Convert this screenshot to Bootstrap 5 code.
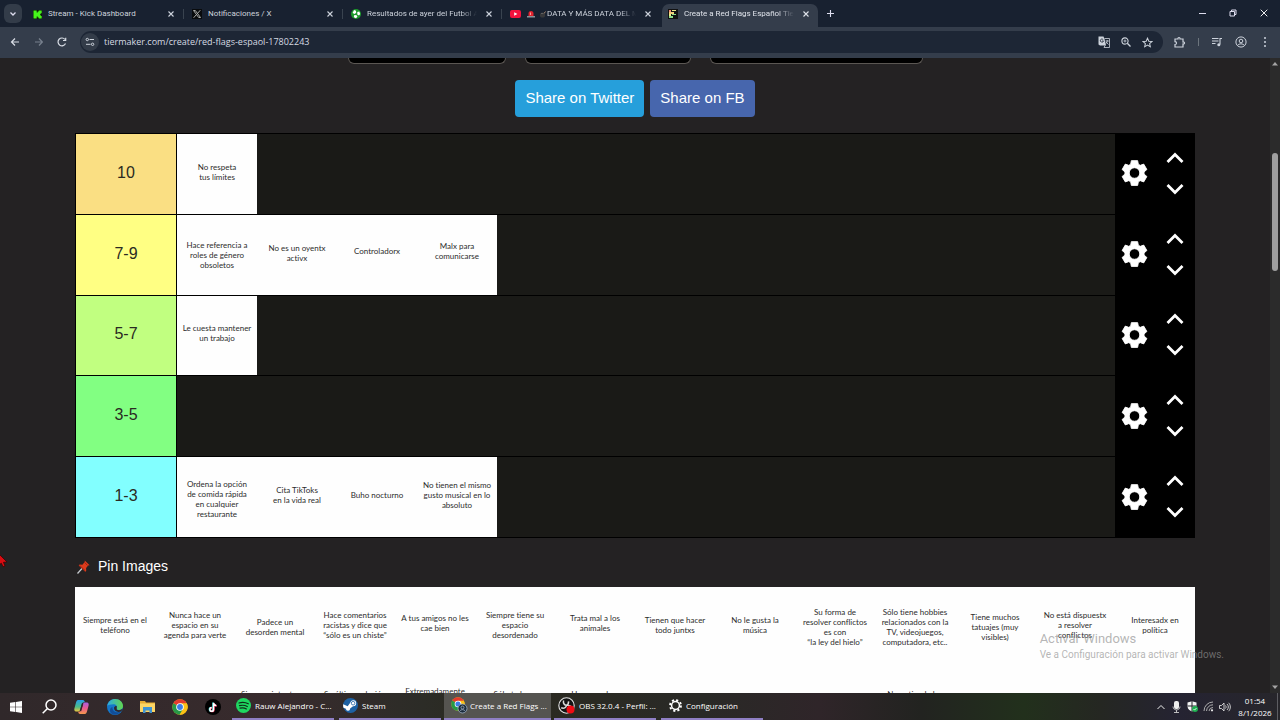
<!DOCTYPE html>
<html lang="es">
<head>
<meta charset="utf-8">
<meta name="viewport" content="width=device-width, initial-scale=1">
<title>Create a Red Flags Español Tier List</title>
<link href="https://cdn.jsdelivr.net/npm/bootstrap@5.3.0/dist/css/bootstrap.min.css" rel="stylesheet">
<style>
  :root { --strip:#182130; --tool:#343d4b; --omni:#1d2635; --page:#242223; --drop:#1a1a17; --ico:#cdd3dc; }
  body { font-family:"Liberation Sans",Arial,sans-serif; background:var(--page); color:#fff; }
  button { background:none; border:0; padding:0; color:inherit; }
  svg { display:block; flex:none; }
  .ui-font { font-family:"Open Sans","Noto Sans",sans-serif; }

  /* browser window */
  .tab-strip { height:27px; background:var(--strip); font-family:Roboto,"Open Sans",sans-serif; font-size:8px; color:var(--ico); }
  .tab-list-btn { width:18px; height:19px; border-radius:6px; background:#333c49; margin:0 4px; }
  .tab-item { flex:0 1 159px; min-width:0; height:23px; padding:0 10px 3px 7px; position:relative; }
  .tab-item:not(.is-active):not(.no-line)::after { content:""; position:absolute; right:1px; top:5px; width:1px; height:10px; background:#39434f; }
  .tab-item.is-active { background:var(--tool); border-radius:7px 7px 0 0; flex-basis:156px; padding-left:6px; padding-right:8px; color:#dfe3ea; }
  .tab-name { flex:1; min-width:0; overflow:hidden; white-space:nowrap; margin:0 8px 0 6px; }
  .tab-name.fades { -webkit-mask-image:linear-gradient(90deg,#000 85%,transparent); mask-image:linear-gradient(90deg,#000 85%,transparent); }
  .window-btns { gap:23px; padding:0 12px 1px 0; }
  .tool-row { height:31px; padding:0 9px 1px 9px; background:var(--tool); color:var(--ico); }
  .nav-btns { gap:14px; margin-right:13px; }
  .end-btns { gap:12px; margin-left:11px; }
  .omnibox { height:22px; border-radius:11px; background:var(--omni); padding:0 10px 0 1px; gap:11px; }
  .omnibox input { background:none; border:0; outline:0; color:#d5dae2; font-size:9px; padding:0; min-width:0; margin-left:-6px; }
  .site-chip { width:18px; height:18px; border-radius:50%; background:#333c49; }

  /* tier list page */
  .page-body { max-width:1120px; }
  .field-row { gap:19px; }
  .field-end { height:6px; background:#000; border:1px solid #5b5753; border-top:0; border-radius:0 0 6px 6px; }
  .share-row { gap:6px; }
  .share-btn { font-size:15px; line-height:23px; padding:6px 10px 8px; border-radius:4px; color:#fff; border:0; }
  .share-tw { background:#269fdb; }
  .share-fb { background:#4766ad; }
  .tier-board { min-height:405px; grid-template-rows:repeat(5,1fr); background:#000; padding:1px 0 0 1px; }
  .tier-line { background:var(--drop); border-bottom:1px solid #000; }
  .tier-name { width:101px; border-right:1px solid #000; color:#2a2a22; font-size:16px; padding-bottom:2px; }
  .tier-tools { width:80px; background:#000; padding:0 11px 1px 6px; }
  .move-btns { gap:19px; }
  .tile { width:80px; background:#fefefe; color:#2c2c2c; font:8px/10px Lato,"Open Sans",sans-serif; font-variant-ligatures:none; white-space:nowrap; text-align:center; display:flex; align-items:center; justify-content:center; }
  .pin-title { font-size:14px; line-height:21px; padding:18px 0 10px 2px; }
  .pin-board { display:grid; grid-template-columns:repeat(auto-fill,80px); grid-auto-rows:80px; background:#fefefe; }
  .tile-low { align-items:flex-start; padding-top:22px; }
  .tile-tall { align-items:flex-start; padding-top:19px; }
  .scroll-track { width:10px; background:#2b2b2b; padding:3px 2px; }
  .scroll-thumb { height:118px; border-radius:3px; background:#9f9f9f; margin-top:87px; }
  .watermark { right:56px; bottom:32px; font-family:Roboto,"Open Sans",sans-serif; color:rgba(145,145,145,.68); white-space:nowrap; z-index:3; pointer-events:none; }
  .watermark div { font-size:13px; line-height:18px; }
  .watermark p { font-size:10px; line-height:13px; }
  .pointer { left:-3px; top:495px; }

  /* taskbar */
  .task-bar { height:27px; font-size:8px; background:linear-gradient(90deg,#30282a 0,#382b2d 22%,#2c2c27 33%,#2b2a20 38%,#292926 55%,#2f2529 64%,#222320 72%,#22301c 80%,#252722 86%,#252332 92%,#27262b 100%); }
  .task-icons { flex:0 0 232px; padding-right:3px; }
  .task-icon { flex:1; height:27px; }
  .task-apps { gap:5px; }
  .task-app { flex:0 1 102px; min-width:0; height:27px; border-bottom:2px solid #8f7fc4; padding-left:4px; gap:4px; white-space:nowrap; overflow:hidden; }
  .task-app.is-open { flex-basis:107px; margin:0 -2px; background:#555450; padding-left:7px; gap:2px; }
  .tray-icons { gap:5px; }
  .task-clock { width:48px; line-height:12px; padding-top:2px; }
  .desk-edge { width:3px; border-left:1px solid #5d5d62; margin-left:-2px; }
</style>
</head>
<body class="vh-100 d-flex flex-column overflow-hidden">

<svg width="0" height="0" class="position-absolute" aria-hidden="true">
  <symbol id="x" viewBox="0 0 8 8"><path d="M1.500 1.500l5 5m0-5l-5 5" stroke="currentColor" stroke-width="1.100"/></symbol>
  <symbol id="gear" viewBox="0 0 24 24"><path fill="currentColor" stroke="currentColor" stroke-width=".8" stroke-linejoin="round" fill-rule="evenodd" d="M9.200 1h5.600l.6 3.200 1.700 1 3.100-1.100 2.800 4.800-2.500 2.100v2l2.500 2.100-2.800 4.800-3.100-1.100-1.700 1-.6 3.200H9.200l-.6-3.200-1.700-1-3.100 1.100L1 15.100 3.500 13v-2L1 8.900l2.800-4.800 3.100 1.100 1.700-1zM12 7.300a4.700 4.700 0 1 0 0 9.400 4.700 4.700 0 0 0 0-9.400z"/></symbol>
  <symbol id="up" viewBox="0 0 18 12"><path d="M1.500 10L9 2.500 16.500 10" fill="none" stroke="currentColor" stroke-width="2.800"/></symbol>
  <symbol id="down" viewBox="0 0 18 12"><path d="M1.500 2L9 9.500 16.500 2" fill="none" stroke="currentColor" stroke-width="2.800"/></symbol>
  <symbol id="chrome" viewBox="0 0 24 24"><circle cx="12" cy="12" r="11.500" fill="#fbc116"/><path d="M12 12L2 6.200A11.500 11.500 0 0 1 22 6.200z" fill="#e33b2e"/><path d="M2 6.200a11.500 11.500 0 0 0 9.500 17.300L17 15l-5-3z" fill="#279847"/><path d="M12 6.500h10.100a11.500 11.500 0 0 1-10.600 17l5.300-9z" fill="#fbc116"/><circle cx="12" cy="12" r="5.700" fill="#fff"/><circle cx="12" cy="12" r="4.400" fill="#3c7de6"/></symbol>
</svg>

<header class="ui-font flex-shrink-0">
  <nav class="tab-strip d-flex align-items-end" aria-label="Pestañas">
    <button class="tab-list-btn d-flex align-items-center justify-content-center align-self-center" aria-label="Buscar pestañas"><svg width="8" height="8" viewBox="0 0 8 8"><path d="M1.500 2.500L4 5l2.500-2.500" fill="none" stroke="#dde" stroke-width="1.300"/></svg></button>
    <div class="tab-item d-flex align-items-center">
      <svg width="9" height="9" viewBox="0 0 9 9"><path fill="#0c1a0a" d="M0 0h9v9H0z"/><path fill="#46f51b" d="M.5.500h3.200v2h1v-1h1v-1h3v2.700h-1v1h-.7v.8h.7v1h1v2.500h-3v-1h-1v-1h-1v2H.5z"/></svg>
      <span class="tab-name">Stream - Kick Dashboard</span><button aria-label="Cerrar"><svg width="8" height="8"><use href="#x"/></svg></button>
    </div>
    <div class="tab-item d-flex align-items-center">
      <svg width="10" height="10" viewBox="0 0 10 10"><path fill="#090b0d" d="M0 0h10v10H0z"/><path d="M1.500 1.500h1.800l5.200 7H6.700zM8.300 1.200L5.600 4.300M4.400 5.600L1.600 8.800" fill="none" stroke="#b9bbb9" stroke-width=".9"/></svg>
      <span class="tab-name">Notificaciones / X</span><button aria-label="Cerrar"><svg width="8" height="8"><use href="#x"/></svg></button>
    </div>
    <div class="tab-item d-flex align-items-center">
      <svg width="10" height="10" viewBox="0 0 10 10"><circle cx="5" cy="5" r="5" fill="#1c9a2b"/><path fill="#fff" d="M3 1l2 .8.200 2L3.600 5 1.600 4zM6.300 3l2-.5L9.200 5 8 6.500 6.300 5.400zM3 6.300l2.300-.2 1.200 1.600-1.600 1.600-2-1z"/></svg>
      <span class="tab-name fades">Resultados de ayer del Futbol A</span><button aria-label="Cerrar"><svg width="8" height="8"><use href="#x"/></svg></button>
    </div>
    <div class="tab-item no-line d-flex align-items-center">
      <svg width="11" height="8" viewBox="0 0 11 8"><rect width="11" height="8" rx="2" fill="#f3123d"/><path d="M4.200 2.200v3.600L7.400 4z" fill="#fff"/></svg>
      <span class="tab-name fades d-flex align-items-center"><svg width="8" height="8" viewBox="0 0 8 8"><path d="M1.500 6V3.600a2.500 2.500 0 0 1 5 0V6z" fill="#e2232e"/><path d="M0 6h8v1.500H0z" fill="#8c9299"/><path d="M3 2.500h1V5H3z" fill="#ff9d9a"/></svg><svg class="ms-1" width="8" height="8" viewBox="0 0 7 8"><circle cx="3" cy="5" r="2.600" fill="#37383a"/><path d="M4.500 3.500L6 1.500" stroke="#a88a70"/><path d="M2 4l1-1" stroke="#888"/></svg>DATA Y MÁS DATA DEL M</span><button aria-label="Cerrar"><svg width="8" height="8"><use href="#x"/></svg></button>
    </div>
    <div class="tab-item is-active d-flex align-items-center">
      <svg width="10" height="10" viewBox="0 0 10 10"><path fill="#111" d="M0 0h10v10H0z"/><path fill="#f08a76" d="M1 1h2v2H1z"/><path fill="#f1cf7a" d="M1 3h5v2H1z"/><path fill="#e9e98b" d="M4 1h4v1H4zM1 5h2v2H1z"/><path fill="#8fdd8b" d="M1 7h4v2H1zM4 5h4v1H4z"/></svg>
      <span class="tab-name fades">Create a Red Flags Español Tier</span><button aria-label="Cerrar"><svg width="8" height="8"><use href="#x"/></svg></button>
    </div>
    <button class="align-self-center ms-2" aria-label="Nueva pestaña"><svg width="9" height="9" viewBox="0 0 9 9"><path d="M4.500 1v7M1 4.500h7" stroke="#dde" stroke-width="1.100"/></svg></button>
    <div class="window-btns ms-auto d-flex align-items-center align-self-center">
      <button aria-label="Minimizar"><svg width="7" height="7" viewBox="0 0 7 7"><path d="M0 3.500h7" stroke="#dde"/></svg></button>
      <button aria-label="Restaurar"><svg width="8" height="8" viewBox="0 0 8 8"><path d="M1 2.500h4.500V7H1zM2.500 2.500V1H7v4.500H5.500" fill="none" stroke="#dde"/></svg></button>
      <button aria-label="Cerrar ventana"><svg width="8" height="8" viewBox="0 0 8 8"><path d="M.7.700l6.600 6.600m0-6.600L.7 7.300" stroke="#eee"/></svg></button>
    </div>
  </nav>

  <div class="tool-row d-flex align-items-center">
    <div class="nav-btns d-flex align-items-center">
      <button aria-label="Atrás"><svg width="12" height="10" viewBox="0 0 12 10"><path d="M10 5H2.500M6 1.500L2.500 5 6 8.500" fill="none" stroke="#d8dde5" stroke-width="1.200"/></svg></button>
      <button aria-label="Adelante"><svg width="8" height="10" viewBox="0 0 8 10"><path d="M0 5h7M4 1.500L7.300 5 4 8.500" fill="none" stroke="#77808d" stroke-width="1.200"/></svg></button>
      <button aria-label="Recargar"><svg width="10" height="10" viewBox="0 0 10 10"><path d="M8.500 6.500A3.900 3.900 0 1 1 8 2.500M8.700.8v2.700H6" fill="none" stroke="#d8dde5" stroke-width="1.200"/></svg></button>
    </div>
    <div class="omnibox d-flex align-items-center flex-fill">
      <button class="site-chip d-flex align-items-center justify-content-center" aria-label="Información del sitio"><svg width="10" height="10" viewBox="0 0 10 10"><g fill="none" stroke="currentColor"><path d="M4.500 2.500H9M1 7.300h4.500"/><circle cx="2.300" cy="2.500" r="1.200"/><circle cx="7.600" cy="7.300" r="1.200"/></g></svg></button>
      <input class="flex-fill" type="text" aria-label="Dirección" value="tiermaker.com/create/red-flags-espaol-17802243">
      <button aria-label="Traducir"><svg width="12" height="12" viewBox="0 0 12 12"><path d="M.5.500h5l1 2.500 1.500 6.500h-6l-1.500-1z" fill="#cdd3dc"/><path d="M5.200 3.600A1.600 1.600 0 1 0 5.500 5H4" fill="none" stroke="#1d2635" stroke-width=".8"/><path d="M6.500 2.500h5v9H6l1-2M7.500 5h3.400M9.200 4v1c0 1.500-1 2.500-1.600 3M8 6l2.500 2.500" fill="none" stroke="#cdd3dc" stroke-width=".8"/></svg></button>
      <button aria-label="Zoom"><svg width="10" height="10" viewBox="0 0 10 10"><g fill="none" stroke="currentColor"><circle cx="4" cy="4" r="3.100" stroke-width="1.100"/><path d="M6.300 6.300L9.500 9.500" stroke-width="1.300"/><path d="M4 2.500v3M2.500 4h3" stroke-width=".8"/></g></svg></button>
      <button aria-label="Favorito"><svg width="11" height="11" viewBox="0 0 24 24"><path d="M12 2.500l2.900 6.600 7 .6-5.300 4.700 1.600 7L12 17.600l-6.200 3.800 1.600-7L2.100 9.700l7-.6z" fill="none" stroke="currentColor" stroke-width="2.200"/></svg></button>
    </div>
    <div class="end-btns d-flex align-items-center">
      <button aria-label="Extensiones"><svg width="12" height="12" viewBox="0 0 12 12"><path d="M1 3h3c-.3-2 2.300-2 2 0h3v3c2-.3 2 2.300 0 2v3H1V8.500c2 0 2-2.800 0-2.800z" fill="none" stroke="currentColor" stroke-width="1.200"/></svg></button>
      <span class="border-start border-secondary py-1"></span>
      <button aria-label="Multimedia"><svg width="12" height="10" viewBox="0 0 12 10"><path d="M1 1.500h6.500M1 4h6.500M1 6.500h3.500M9 7.500v-6h2" fill="none" stroke="currentColor" stroke-width="1.100"/><circle cx="7.800" cy="7.700" r="1.500" fill="currentColor"/></svg></button>
      <button aria-label="Perfil"><svg width="12" height="12" viewBox="0 0 12 12"><g fill="none" stroke="currentColor"><circle cx="6" cy="6" r="5.100"/><circle cx="6" cy="5" r="1.800"/><path d="M2.500 9.500c1.600-2.200 5.400-2.200 7 0"/></g></svg></button>
      <button aria-label="Menú"><svg width="12" height="12" viewBox="0 0 12 12"><g fill="currentColor"><circle cx="6" cy="2" r="1"/><circle cx="6" cy="6" r="1"/><circle cx="6" cy="10" r="1"/></g></svg></button>
    </div>
  </div>
</header>

<div class="flex-fill d-flex overflow-hidden position-relative">
  <main class="flex-fill overflow-hidden">
    <div class="field-row row g-0 justify-content-center mb-3" aria-hidden="true">
      <div class="field-end" style="width:158px"></div>
      <div class="field-end" style="width:166px"></div>
      <div class="field-end" style="width:213px"></div>
    </div>
    <div class="share-row d-flex justify-content-center mb-3">
      <button class="share-btn share-tw">Share on Twitter</button>
      <button class="share-btn share-fb">Share on FB</button>
    </div>

    <div class="page-body mx-auto">
      <section class="tier-board d-grid">
        <div class="tier-line d-flex">
          <div class="tier-name d-flex align-items-center justify-content-center" style="background:#fadf83">10</div>
          <div class="tile pb-1">No respeta<br>tus límites</div>
          <div class="tier-tools d-flex align-items-center justify-content-between ms-auto"><button aria-label="Ajustes"><svg width="27" height="28"><use href="#gear"/></svg></button><div class="move-btns d-grid"><button aria-label="Subir"><svg width="18" height="12"><use href="#up"/></svg></button><button aria-label="Bajar"><svg width="18" height="12"><use href="#down"/></svg></button></div></div>
        </div>
        <div class="tier-line d-flex">
          <div class="tier-name d-flex align-items-center justify-content-center" style="background:#ffff83">7-9</div>
          <div class="tile">Hace referencia a<br>roles de género<br>obsoletos</div>
          <div class="tile pb-1">No es un oyentx<br>activx</div>
          <div class="tile pb-2">Controladorx</div>
          <div class="tile pb-2">Malx para<br>comunicarse</div>
          <div class="tier-tools d-flex align-items-center justify-content-between ms-auto"><button aria-label="Ajustes"><svg width="27" height="28"><use href="#gear"/></svg></button><div class="move-btns d-grid"><button aria-label="Subir"><svg width="18" height="12"><use href="#up"/></svg></button><button aria-label="Bajar"><svg width="18" height="12"><use href="#down"/></svg></button></div></div>
        </div>
        <div class="tier-line d-flex">
          <div class="tier-name d-flex align-items-center justify-content-center" style="background:#c1ff80">5-7</div>
          <div class="tile pb-1">Le cuesta mantener<br>un trabajo</div>
          <div class="tier-tools d-flex align-items-center justify-content-between ms-auto"><button aria-label="Ajustes"><svg width="27" height="28"><use href="#gear"/></svg></button><div class="move-btns d-grid"><button aria-label="Subir"><svg width="18" height="12"><use href="#up"/></svg></button><button aria-label="Bajar"><svg width="18" height="12"><use href="#down"/></svg></button></div></div>
        </div>
        <div class="tier-line d-flex">
          <div class="tier-name d-flex align-items-center justify-content-center" style="background:#82ff82">3-5</div>
          <div class="tier-tools d-flex align-items-center justify-content-between ms-auto"><button aria-label="Ajustes"><svg width="27" height="28"><use href="#gear"/></svg></button><div class="move-btns d-grid"><button aria-label="Subir"><svg width="18" height="12"><use href="#up"/></svg></button><button aria-label="Bajar"><svg width="18" height="12"><use href="#down"/></svg></button></div></div>
        </div>
        <div class="tier-line d-flex">
          <div class="tier-name d-flex align-items-center justify-content-center" style="background:#82ffff">1-3</div>
          <div class="tile pt-1">Ordena la opción<br>de comida rápida<br>en cualquier<br>restaurante</div>
          <div class="tile pb-1">Cita TikToks<br>en la vida real</div>
          <div class="tile pb-1">Buho nocturno</div>
          <div class="tile pb-1">No tienen el mismo<br>gusto musical en lo<br>absoluto</div>
          <div class="tier-tools d-flex align-items-center justify-content-between ms-auto"><button aria-label="Ajustes"><svg width="27" height="28"><use href="#gear"/></svg></button><div class="move-btns d-grid"><button aria-label="Subir"><svg width="18" height="12"><use href="#up"/></svg></button><button aria-label="Bajar"><svg width="18" height="12"><use href="#down"/></svg></button></div></div>
        </div>
      </section>

      <h2 class="pin-title d-flex align-items-center gap-2 m-0 fw-normal"><svg width="13" height="14" viewBox="0 0 13 14"><path d="M.5 13.500L5 8.500" stroke="#c7cbd0" stroke-width="1.200"/><path d="M7.800.5l4.800 4.700-1.500.4-2 2.400.1 2.900-1 .8L1.700 5.400l.9-.9 2.800.2L7.700 2z" fill="#dd3b1c"/><path d="M7.600 2.500l3 3M2.600 5.400L8 10.600" stroke="#8f1d10" stroke-width=".8"/></svg>Pin Images</h2>
      <section class="pin-board">
        <div class="tile pb-1">Siempre está en el<br>teléfono</div>
        <div class="tile pb-1">Nunca hace un<br>espacio en su<br>agenda para verte</div>
        <div class="tile">Padece un<br>desorden mental</div>
        <div class="tile pb-1">Hace comentarios<br>racistas y dice que<br>“sólo es un chiste”</div>
        <div class="tile pb-2">A tus amigos no les<br>cae bien</div>
        <div class="tile pb-1">Siempre tiene su<br>espacio<br>desordenado</div>
        <div class="tile pb-2">Trata mal a los<br>animales</div>
        <div class="tile pb-1">Tienen que hacer<br>todo juntxs</div>
        <div class="tile pb-1">No le gusta la<br>música</div>
        <div class="tile">Su forma de<br>resolver conflictos<br>es con<br>“la ley del hielo”</div>
        <div class="tile">Sólo tiene hobbies<br>relacionados con la<br>TV, videojuegos,<br>computadora, etc..</div>
        <div class="tile">Tiene muchos<br>tatuajes (muy<br>visibles)</div>
        <div class="tile pb-1">No está dispuestx<br>a resolver<br>conflictos</div>
        <div class="tile pb-1">Interesadx en<br>política</div>
        <div class="tile"></div>
        <div class="tile"></div>
        <div class="tile tile-low">Siempre intenta ser</div>
        <div class="tile tile-low">Su última relación</div>
        <div class="tile tile-tall">Extremadamente</div>
        <div class="tile tile-low">Sólo te hace</div>
        <div class="tile tile-low">Hace muchos</div>
        <div class="tile"></div>
        <div class="tile"></div>
        <div class="tile"></div>
        <div class="tile tile-low">No entiende los</div>
      </section>
    </div>
  </main>
  <div class="scroll-track d-flex flex-column align-items-stretch flex-shrink-0" aria-hidden="true">
    <svg width="6" height="5" viewBox="0 0 6 5"><path d="M0 4.500L3 1l3 3.500z" fill="#a5a5a5"/></svg>
    <div class="scroll-thumb flex-shrink-0"></div>
    <svg class="mt-auto" width="6" height="5" viewBox="0 0 6 5"><path d="M0 .5L3 4l3-3.500z" fill="#a5a5a5"/></svg>
  </div>
  <aside class="watermark position-absolute"><div>Activar Windows</div><p class="m-0">Ve a Configuración para activar Windows.</p></aside>
  <svg class="pointer position-absolute" width="12" height="15" viewBox="0 0 12 15" aria-hidden="true"><path d="M2 1l8 8-3.500.3L8 13l-2 .8-1.700-3.600L2 12z" fill="#d80d12" stroke="#3a0505" stroke-width=".8"/></svg>
</div>

<footer class="task-bar ui-font d-flex align-items-stretch flex-shrink-0">
  <div class="task-icons d-flex">
    <button class="task-icon d-flex align-items-center justify-content-center" aria-label="Inicio"><svg width="12" height="12" viewBox="0 0 12 12"><path fill="#fff" d="M0 1.800l5.400-.8v4.700H0zM6 .9L12 0v5.700H6zM0 6.300h5.400V11L0 10.200zM6 6.300h6V12l-6-.9z"/></svg></button>
    <button class="task-icon d-flex align-items-center justify-content-center" aria-label="Buscar"><svg width="15" height="15" viewBox="0 0 15 15"><g fill="none" stroke="#fff" stroke-width="1.500"><circle cx="9" cy="6" r="5"/><path d="M5.500 9.500L.7 14.300"/></g></svg></button>
    <button class="task-icon d-flex align-items-center justify-content-center" aria-label="Copilot"><svg width="15" height="14" viewBox="0 0 15 14"><defs><linearGradient id="ca" x2="0" y2="1"><stop stop-color="#279ee9"/><stop offset=".6" stop-color="#4dbd87"/><stop offset="1" stop-color="#edc43e"/></linearGradient><linearGradient id="cb" x2="0" y2="1"><stop stop-color="#a85fe0"/><stop offset=".5" stop-color="#ec5a8e"/><stop offset="1" stop-color="#f49a4b"/></linearGradient></defs><path d="M4 0h5c1 0 1.500 1 1.800 2L8 3 6 10c-.4 1-1 1.500-2 1.500H2C.5 11.500 0 10 .4 8.500L2 2.500C2.500 1 3 0 4 0z" fill="url(#ca)"/><path d="M11 14H6c-1 0-1.500-1-1.800-2L7 11l2-7c.4-1 1-1.500 2-1.500h2c1.500 0 2 1.500 1.600 3L13 11.500c-.5 1.500-1 2.500-2 2.500z" fill="url(#cb)"/><path d="M8.700 3.500L6.500 11" stroke="#30282a" stroke-width="1.300"/></svg></button>
    <button class="task-icon d-flex align-items-center justify-content-center" aria-label="Edge"><svg width="16" height="16" viewBox="0 0 16 16"><defs><linearGradient id="ed"><stop stop-color="#2ba9e5"/><stop offset="1" stop-color="#63d64b"/></linearGradient></defs><circle cx="8" cy="8" r="8" fill="#1476c9"/><path d="M.2 7C1 2.500 4.500 0 8.200 0 13 0 16 3.500 16 7c0 2.500-2 4-4 4-1.600 0-2.800-.6-2.300-1.500C10.700 7 9 5.300 6.500 5.300 3.500 5.300 1 6 .2 7z" fill="url(#ed)"/><path d="M5.500 8c-.5 4 3.500 6.500 8.500 4.500-2 3-6 4-9 2.500C2 13 2.500 9 5.500 8z" fill="#124d98"/><path d="M9.700 9.500c-.5.900.7 1.700 2.300 1.700 1.400 0 2.500-.5 3.300-1.400l.4.700-1.700 2c-4 1.500-7-1-7-3.500 0-1.500 1.400-2 2.700-2z" fill="#30282a"/></svg></button>
    <button class="task-icon d-flex align-items-center justify-content-center" aria-label="Explorador de archivos"><svg width="15" height="13" viewBox="0 0 15 13"><path d="M0 1h5l1 1.500h9V12H0z" fill="#e8ad33"/><path d="M0 3.500h15V12H0z" fill="#fcd565"/><path d="M3 7h9v6H9.500v-2.500h-4V13H3z" fill="#3e93d2"/></svg></button>
    <button class="task-icon d-flex align-items-center justify-content-center" aria-label="Chrome"><svg width="16" height="16"><use href="#chrome"/></svg></button>
    <button class="task-icon d-flex align-items-center justify-content-center" aria-label="TikTok"><svg width="16" height="16" viewBox="0 0 16 16"><circle cx="8" cy="8" r="8" fill="#000"/><g fill="none" stroke-width="1.500"><path d="M8 3.500v6.700a1.800 1.800 0 1 1-1.800-1.800M8 4c.3 1.500 1.300 2.300 2.800 2.400" stroke="#2de0dc"/><path d="M9 4v6.700A1.800 1.800 0 1 1 7.200 8.900M9 4.500c.3 1.500 1.300 2.300 2.800 2.400" stroke="#f23059"/><path d="M8.500 3.700v6.700a1.800 1.800 0 1 1-1.800-1.800M8.500 4.200c.3 1.500 1.300 2.300 2.800 2.400" stroke="#fff"/></g></svg></button>
  </div>
  <div class="task-apps d-flex flex-fill">
    <button class="task-app d-flex align-items-center"><svg width="15" height="15" viewBox="0 0 15 15"><circle cx="7.500" cy="7.500" r="7.500" fill="#1ed760"/><path d="M3 5c3-1 6.500-.7 9.300.8M3.500 7.700c2.700-.8 5.500-.5 7.800.8M4 10.200c2.200-.6 4.500-.4 6.400.7" fill="none" stroke="#102b18" stroke-width="1.200" stroke-linecap="round"/></svg>Rauw Alejandro - C...</button>
    <button class="task-app d-flex align-items-center"><svg width="15" height="15" viewBox="0 0 15 15"><circle cx="7.500" cy="7.500" r="7.500" fill="#1d61a3"/><path d="M.2 6.300L4.700 8.200l2.500-3.400A3 3 0 1 1 10 8.200l-2.900 2.200a2.100 2.100 0 0 1-4.200.3L.5 9.700A7 7 0 0 1 .2 6.300z" fill="#fff"/><circle cx="10.100" cy="5.200" r="1.800" fill="none" stroke="#1d61a3" stroke-width=".8"/></svg>Steam</button>
    <button class="task-app is-open d-flex align-items-center"><svg width="17" height="17" viewBox="0 0 17 17"><use href="#chrome" width="14" height="14"/><circle cx="11.500" cy="11.500" r="4.500" fill="#1b2b3c" stroke="#9fb1c4" stroke-width=".8"/><circle cx="11.500" cy="10.500" r="1.500" fill="none" stroke="#9fb1c4" stroke-width=".8"/><path d="M8.800 14c1-1.800 4.400-1.800 5.400 0" fill="none" stroke="#9fb1c4" stroke-width=".8"/></svg>Create a Red Flags ...</button>
    <button class="task-app d-flex align-items-center"><svg width="17" height="17" viewBox="0 0 17 17"><circle cx="8.500" cy="8.500" r="7.700" fill="#141414" stroke="#e4e4e4" stroke-width="1.100"/><path d="M5.500 3.500c-.5 3 1 4.800 3 4.800 2-.3 4-.2 5 2M8.500 8.300c-.4 2.300-2.500 3.600-5.300 2.500M8.500 8.300c1.500-.8 2.300-2 2-4" fill="none" stroke="#ddd" stroke-width="1.500"/><circle cx="12.500" cy="12.500" r="4" fill="#f00c14"/></svg>OBS 32.0.4 - Perfil: ...</button>
    <button class="task-app d-flex align-items-center ps-2"><svg width="13" height="13" viewBox="0 0 14 14"><circle cx="7" cy="7" r="4.200" fill="none" stroke="#fff" stroke-width="1.600"/><circle cx="7" cy="7" r="5.900" fill="none" stroke="#fff" stroke-width="2" stroke-dasharray="2.300 2.334"/></svg>Configuración</button>
  </div>
  <div class="tray-icons d-flex align-items-center">
    <button aria-label="Iconos ocultos"><svg width="8" height="6" viewBox="0 0 8 6"><path d="M.5 5L4 1.500 7.500 5" fill="none" stroke="#eee"/></svg></button>
    <svg width="12" height="12" viewBox="0 0 12 12"><rect x="4" width="5" height="8" rx="2" fill="#eee"/><path d="M3 5.500c0 4.500 7 4.500 7 0M6.500 9v2.500M4 11.500h5" fill="none" stroke="#ccc" stroke-width=".9"/></svg>
    <svg width="11" height="11" viewBox="0 0 11 11"><path d="M5 .2L9.500 1.500v4C9.500 8 7 9.700 5 10.500 3 9.700.5 8 .5 5.500v-4z" fill="#f4f4f4"/><path d="M5 0v10.500M.5 5h9" stroke="#25252a"/><circle cx="8" cy="8" r="3" fill="#1eae50"/><path d="M6.500 8l1.100 1.100L9.500 7" fill="none" stroke="#fff" stroke-width=".8"/></svg>
    <svg width="11" height="11" viewBox="0 0 11 11"><g fill="none" stroke="#bbb" stroke-width=".9"><path d="M1 10A9 9 0 0 1 10 1M3.500 10A6.500 6.500 0 0 1 10 3.800M6 10a4 4 0 0 1 4-3.500"/></g><circle cx="9" cy="9.300" r="1.100" fill="#eee"/></svg>
    <svg width="12" height="10" viewBox="0 0 12 10"><path d="M.5 3.500h2L5 1v8L2.500 6.500h-2zM6.500 3.500c.8.800.8 2.200 0 3M8 2c1.800 1.800 1.800 4.200 0 6M9.600.8c2.300 2.300 2.300 6.100 0 8.400" fill="none" stroke="#ddd" stroke-width=".9"/></svg>
  </div>
  <div class="task-clock text-center">01:54<br>8/1/2026</div>
  <div class="desk-edge"></div>
</footer>
<script src="https://cdn.jsdelivr.net/npm/bootstrap@5.3.0/dist/js/bootstrap.bundle.min.js"></script>
</body>
</html>
